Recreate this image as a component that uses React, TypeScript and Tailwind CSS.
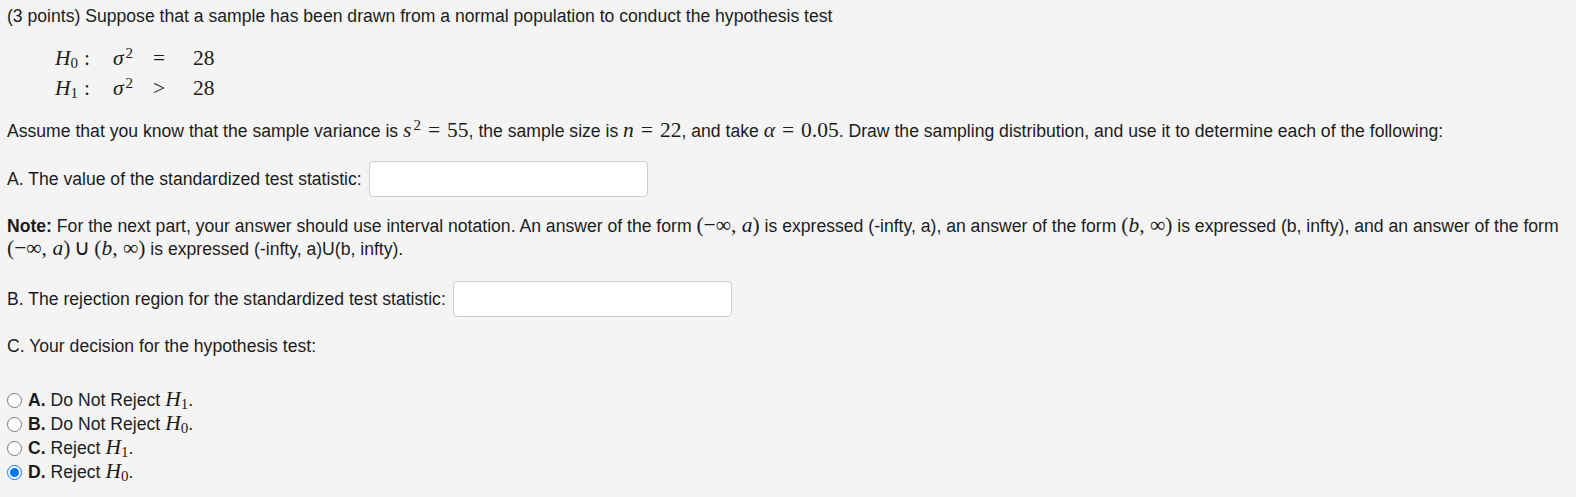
function M({ children }: { children: React.ReactNode }) {
  return (
    <span className="font-['Liberation_Serif',serif] text-[21.5px] leading-none whitespace-nowrap">{children}</span>
  )
}

function I({ children }: { children: React.ReactNode }) {
  return <span className="italic">{children}</span>
}

function Sub({ children }: { children: React.ReactNode }) {
  return <sub className="text-[0.7em] not-italic relative -bottom-[0.18em] align-baseline">{children}</sub>
}

function Sup({ children }: { children: React.ReactNode }) {
  return <sup className="text-[0.7em] relative -top-[0.45em] align-baseline ml-[2px]">{children}</sup>
}

function Rel({ children }: { children: React.ReactNode }) {
  return <span className="mx-[7px]">{children}</span>
}

function H({ n }: { n: string }) {
  return (
    <M>
      <I>H</I>
      <Sub>{n}</Sub>
    </M>
  )
}

function Hyp({ n, op }: { n: string; op: string }) {
  return (
    <div className="flex items-center h-[30px] font-['Liberation_Serif',serif] text-[21.5px]">
      <span className="w-[58px]">
        <I>H</I>
        <Sub>{n}</Sub>
        <span className="ml-[6px]">:</span>
      </span>
      <span className="w-[40px]">
        <I>σ</I>
        <Sup>2</Sup>
      </span>
      <span className="w-[40px]">{op}</span>
      <span>28</span>
    </div>
  )
}

function Choice({ letter, text, n, checked }: { letter: string; text: string; n: string; checked?: boolean }) {
  return (
    <label className="flex items-center h-[24px]">
      <input type="radio" name="decision" defaultChecked={checked} className="w-[15px] h-[15px] m-0 mr-[6px]" />
      <span className="font-bold">{letter}.</span>
      <span className="ml-[5px]">{text}</span>
      <span className="ml-[5px]"><H n={n} /></span>
      <span>.</span>
    </label>
  )
}

function Answer() {
  return <input type="text" className="w-[279px] h-[36px] bg-white border border-[#cccccc] rounded-[4px] ml-[7px]" />
}

export default function App() {
  return (
    <div className="min-h-[497px] bg-[#f4f4f4] text-[#1c1c1c] font-['Liberation_Sans',Arial,sans-serif] text-[17.6px] pl-[7px] pt-[6px]">
      <p className="leading-5">(3 points) Suppose that a sample has been drawn from a normal population to conduct the hypothesis test</p>

      <div className="mt-[17px] pl-[48px]">
        <Hyp n="0" op="=" />
        <Hyp n="1" op=">" />
      </div>

      <p className="mt-[16px] leading-6">
        Assume that you know that the sample variance is{' '}
        <M><I>s</I><Sup>2</Sup><Rel>=</Rel>55</M>, the sample size is <M><I>n</I><Rel>=</Rel>22</M>, and take{' '}
        <M><I>α</I><Rel>=</Rel>0.05</M>. Draw the sampling distribution, and use it to determine each of the following:
      </p>

      <div className="mt-[18px] flex items-center">
        <span>A. The value of the standardized test statistic:</span>
        <Answer />
      </div>

      <p className="mt-[18px] leading-[23px] pr-[10px]">
        <span className="font-bold">Note:</span> For the next part, your answer should use interval notation. An answer of the form{' '}
        <M>(−∞, <I>a</I>)</M> is expressed (-infty, a), an answer of the form <M>(<I>b</I>, ∞)</M> is expressed (b, infty), and an answer of the form{' '}
        <M>(−∞, <I>a</I>)<span className="mx-[4px]">∪</span>(<I>b</I>, ∞)</M> is expressed (-infty, a)U(b, infty).
      </p>

      <div className="mt-[20px] flex items-center">
        <span>B. The rejection region for the standardized test statistic:</span>
        <Answer />
      </div>

      <p className="mt-[17px] leading-6">C. Your decision for the hypothesis test:</p>

      <div className="mt-[30px] pb-[12px]">
        <Choice letter="A" text="Do Not Reject" n="1" />
        <Choice letter="B" text="Do Not Reject" n="0" />
        <Choice letter="C" text="Reject" n="1" />
        <Choice letter="D" text="Reject" n="0" checked />
      </div>
    </div>
  )
}
